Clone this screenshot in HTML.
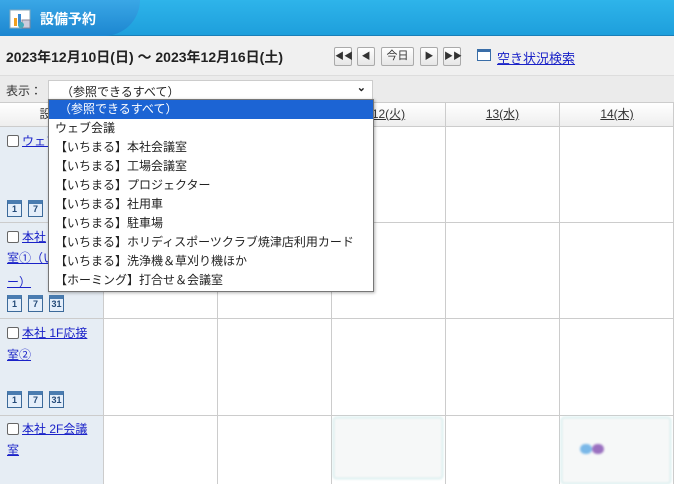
<!DOCTYPE html>
<html><head><meta charset="utf-8"><style>
*{margin:0;padding:0;box-sizing:border-box}
body{width:674px;height:484px;overflow:hidden;font-family:"Liberation Sans","Noto Sans CJK JP",sans-serif;font-size:12px;color:#222;background:#fff;position:relative}
.hdr{position:absolute;left:0;top:0;width:674px;height:36px;background:linear-gradient(#2eb4ea,#1e9fdc);border-bottom:1px solid #1a7fb8}
.hdr .tab{position:absolute;left:0;top:0;width:140px;height:36px;background:linear-gradient(#3aa7e6,#1c86d0);border-radius:0 0 40px 0}
.hdr .t{position:absolute;left:40px;top:9px;color:#fff;font-weight:bold;font-size:14px}
.bar1{position:absolute;left:0;top:36px;width:674px;height:40px;background:#f0f0f0;border-bottom:1px solid #ddd}
.date{position:absolute;left:6px;top:47px;font-size:14px;font-weight:bold;color:#222}
.btn{position:absolute;top:47px;height:19px;border:1px solid #aaa;border-radius:2px;background:linear-gradient(#fff,#e6e6e6);font-size:9px;text-align:center;line-height:17px;color:#333}
.bar2{position:absolute;left:0;top:76px;width:674px;height:26px;background:#ebebeb}
.sel{position:absolute;left:48px;top:80px;width:325px;height:20px;background:#fff;border:1px solid #ccc;font-size:12px;padding:2px 12px}
.g{position:absolute;background:#ccc}
.hd{position:absolute;top:103px;height:23px;background:linear-gradient(#fff,#eee);font-size:12px;color:#333;text-decoration:underline;text-align:center;line-height:23px}
.lab{position:absolute;left:0;width:103px;background:#e6edf4}
.tx{position:absolute;left:7px;font-size:12px;white-space:nowrap}
a{color:#1a22c8;text-decoration:underline}
.cb{display:inline-block;width:12px;height:12px;border:1px solid #666;border-radius:2px;background:#fff;vertical-align:-2px;margin-right:3px}
.ic{display:inline-block;width:15px;height:17px;border:1px solid #3c6a9a;background:#e4eefa;margin-right:6px;font-size:9px;font-weight:bold;color:#244a78;text-align:center;line-height:11px;border-top:4px solid #4a7cb0}
.dd{position:absolute;left:48px;top:99px;width:326px;height:193px;background:#fff;border:1px solid #777;box-shadow:1px 1px 3px rgba(0,0,0,.3)}
.dd div{height:19px;line-height:19px;padding-left:6px;font-size:12px;color:#222;white-space:nowrap}
.dd .s{background:#1c64d4;color:#fff;padding-left:10px}
.blur{position:absolute;border:1px solid #bfe3e3;border-radius:3px;background:#f6f8f8;filter:blur(1px)}
</style></head><body>
<div class="hdr"><div class="tab"></div>
<svg style="position:absolute;left:8px;top:8px" width="26" height="24"><rect x="2" y="2" width="20" height="18" fill="#fff" stroke="#8ab" /><rect x="6" y="10" width="3" height="8" fill="#f0a020"/><rect x="10" y="6" width="3" height="12" fill="#3a8ad0"/><rect x="14" y="12" width="8" height="8" fill="#ccd" stroke="#889"/><circle cx="13" cy="17" r="3" fill="#4ab"/></svg>
<div class="t">設備予約</div></div>
<div class="bar1"></div>
<div class="date">2023年12月10日(日) ～ 2023年12月16日(土)</div>
<div class="btn" style="left:334px;width:18px">◀◀</div>
<div class="btn" style="left:357px;width:18px">◀</div>
<div class="btn" style="left:381px;width:33px;font-size:11px">今日</div>
<div class="btn" style="left:420px;width:18px">▶</div>
<div class="btn" style="left:443px;width:18px">▶▶</div>
<div style="position:absolute;left:477px;top:49px;width:14px;height:12px;border:1px solid #3a6ea8;border-top:3px solid #3a6ea8;background:#fff"></div>
<a style="position:absolute;left:497px;top:48px;font-size:13px">空き状況検索</a>
<div class="bar2"></div>
<div style="position:absolute;left:6px;top:82px;font-size:12px;color:#333">表示：</div>
<div class="sel">（参照できるすべて）<span style="position:absolute;right:6px;top:0px;font-size:11px;font-weight:bold">&#8964;</span></div>

<div class="lab" style="top:102px;height:382px"></div>
<div class="hd" style="left:0;width:103px;text-decoration:none">設備</div>
<div class="hd" style="left:104px;width:113px"></div>
<div class="hd" style="left:218px;width:113px"></div>
<div class="hd" style="left:332px;width:113px">12(火)</div>
<div class="hd" style="left:446px;width:113px">13(水)</div>
<div class="hd" style="left:560px;width:114px">14(木)</div>
<div class="g" style="left:0;top:102px;width:674px;height:1px"></div>
<div class="g" style="left:0;top:126px;width:674px;height:1px"></div>
<div class="g" style="left:0;top:222px;width:674px;height:1px"></div>
<div class="g" style="left:0;top:318px;width:674px;height:1px"></div>
<div class="g" style="left:0;top:415px;width:674px;height:1px"></div>
<div class="g" style="left:103px;top:102px;width:1px;height:382px"></div>
<div class="g" style="left:217px;top:102px;width:1px;height:382px"></div>
<div class="g" style="left:331px;top:102px;width:1px;height:382px"></div>
<div class="g" style="left:445px;top:102px;width:1px;height:382px"></div>
<div class="g" style="left:559px;top:102px;width:1px;height:382px"></div>
<div class="g" style="left:673px;top:102px;width:1px;height:382px"></div>

<div class="tx" style="top:132px"><span class="cb"></span><a>ウェブ</a></div>
<div class="tx" style="top:200px"><span class="ic">1</span><span class="ic">7</span></div>
<div class="tx" style="top:228px"><span class="cb"></span><a>本社</a></div>
<div class="tx" style="top:249px"><a>室①（い</a></div>
<div class="tx" style="top:273px"><a>ー）</a></div>
<div class="tx" style="top:295px"><span class="ic">1</span><span class="ic">7</span><span class="ic">31</span></div>
<div class="tx" style="top:324px"><span class="cb"></span><a>本社 1F応接</a></div>
<div class="tx" style="top:346px"><a>室②</a></div>
<div class="tx" style="top:391px"><span class="ic">1</span><span class="ic">7</span><span class="ic">31</span></div>
<div class="tx" style="top:420px"><span class="cb"></span><a>本社 2F会議</a></div>
<div class="tx" style="top:441px"><a>室</a></div>

<div class="blur" style="left:333px;top:417px;width:110px;height:62px"></div>
<div class="blur" style="left:561px;top:417px;width:110px;height:67px"><span style="position:absolute;left:18px;top:26px;width:12px;height:10px;border-radius:5px;background:#7ab8e8"></span><span style="position:absolute;left:30px;top:26px;width:12px;height:10px;border-radius:5px;background:#9a70c0"></span></div>
<div class="dd">
<div class="s">（参照できるすべて）</div>
<div>ウェブ会議</div>
<div>【いちまる】本社会議室</div>
<div>【いちまる】工場会議室</div>
<div>【いちまる】プロジェクター</div>
<div>【いちまる】社用車</div>
<div>【いちまる】駐車場</div>
<div>【いちまる】ホリディスポーツクラブ焼津店利用カード</div>
<div>【いちまる】洗浄機＆草刈り機ほか</div>
<div>【ホーミング】打合せ＆会議室</div>
</div>
</body></html>
